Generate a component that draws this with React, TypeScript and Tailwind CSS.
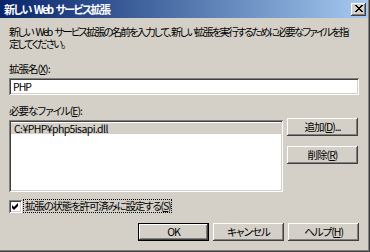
const raised =
  "shadow-[inset_-1px_-1px_#404040,inset_1px_1px_#ffffff,inset_-2px_-2px_#808080,inset_2px_2px_#d4d0c8]";
const sunken =
  "shadow-[inset_1px_1px_#808080,inset_-1px_-1px_#ffffff,inset_2px_2px_#404040,inset_-2px_-2px_#d4d0c8]";

function Key({ k }: { k: string }) {
  return <span className="underline underline-offset-[1px]">{k}</span>;
}

function Btn({
  children,
  isDefault,
}: {
  children: React.ReactNode;
  isDefault?: boolean;
}) {
  if (isDefault) {
    return (
      <div className="w-[71px] h-[18px] border border-black">
        <div className={`h-full flex items-center justify-center ${raised}`}>
          {children}
        </div>
      </div>
    );
  }
  return (
    <div
      className={`w-[71px] h-[18px] flex items-center justify-center ${raised}`}
    >
      {children}
    </div>
  );
}

export default function App() {
  return (
    <div className="w-[370px] h-[252px] overflow-hidden bg-[#d4d0c8] border-r border-b border-[#404040] font-['Noto_Sans_CJK_JP',sans-serif] text-[10.5px] leading-[12px] text-black [font-feature-settings:'palt'] tracking-[-1px]">
      <div className="h-full flex flex-col border-r border-b border-[#808080]">
        {/* TITLE BAR */}
        <div className="h-[18px] flex items-center justify-between pl-[4px] pr-[2px] bg-gradient-to-r from-[#0a246a] to-[#a6caf0]">
          <span className="text-white font-bold text-[11px] tracking-[-1.6px]">
            新しい<span className="mx-[3px]">Web</span>サービス拡張
          </span>
          <div
            className={`w-[15px] h-[13px] flex items-center justify-center bg-[#d4d0c8] ${raised}`}
          >
            <svg width="8" height="7" viewBox="0 0 8 7" className="-mt-px">
              <path
                d="M0 0h2v1h1v1h2v-1h1v-1h2v1h-1v1h-1v1h-1v1h1v1h1v1h1v1h-2v-1h-1v-1h-2v1h-1v1h-2v-1h1v-1h1v-1h1v-1h-1v-1h-1v-1h-1z"
                fill="#000"
              />
            </svg>
          </div>
        </div>

        {/* BODY */}
        <div className="flex-1 flex flex-col pl-[9px] pr-[9px]">
          <p className="mt-[8px] whitespace-nowrap tracking-[-1.9px]">
            新しい<span className="mx-[3px]">Web</span>サービス拡張の名前を入力して、新しい拡張を実行するために必要なファイルを指
            <br />
            定してください。
          </p>

          <p className="mt-[13px]">
            拡張名(<Key k="X" />):
          </p>
          <div className={`mt-[3px] h-[17px] bg-white flex items-center pl-[4px] ${sunken}`}>
            PHP
          </div>

          <p className="mt-[10px]">
            必要なファイル(<Key k="E" />):
          </p>
          <div className="mt-[1px] flex gap-[4px]">
            <div className={`mt-[2px] w-[274px] h-[72px] bg-white p-[2px] ${sunken}`}>
              <div className="mt-[1px] h-[11px] bg-[#d4d0c8] flex items-center pl-[3px] tracking-[-0.6px]">
                C:¥PHP¥php5isapi.dll
              </div>
            </div>
            <div className="flex flex-col gap-[10px]">
              <Btn>
                追加(<Key k="D" />)...
              </Btn>
              <Btn>
                削除(<Key k="R" />)
              </Btn>
            </div>
          </div>

          <div className="mt-[7px] flex items-center gap-[1px]">
            <div
              className={`w-[13px] h-[13px] bg-white flex items-center justify-center ${sunken}`}
            >
              <svg width="7" height="7" viewBox="0 0 7 7">
                <path d="M6 0v3l-4 4h-0l-2-2v-3l2 2z" fill="#000" />
              </svg>
            </div>
            <span className="border border-dotted border-black px-[1px] h-[14px] flex items-center tracking-[-1.2px]">
              拡張の状態を許可済みに設定する(<Key k="S" />)
            </span>
          </div>

          <div className="mt-[10px] flex justify-end gap-[4px]">
            <Btn isDefault>OK</Btn>
            <Btn>キャンセル</Btn>
            <Btn>
              ヘルプ(<Key k="H" />)
            </Btn>
          </div>
        </div>
      </div>
    </div>
  );
}
